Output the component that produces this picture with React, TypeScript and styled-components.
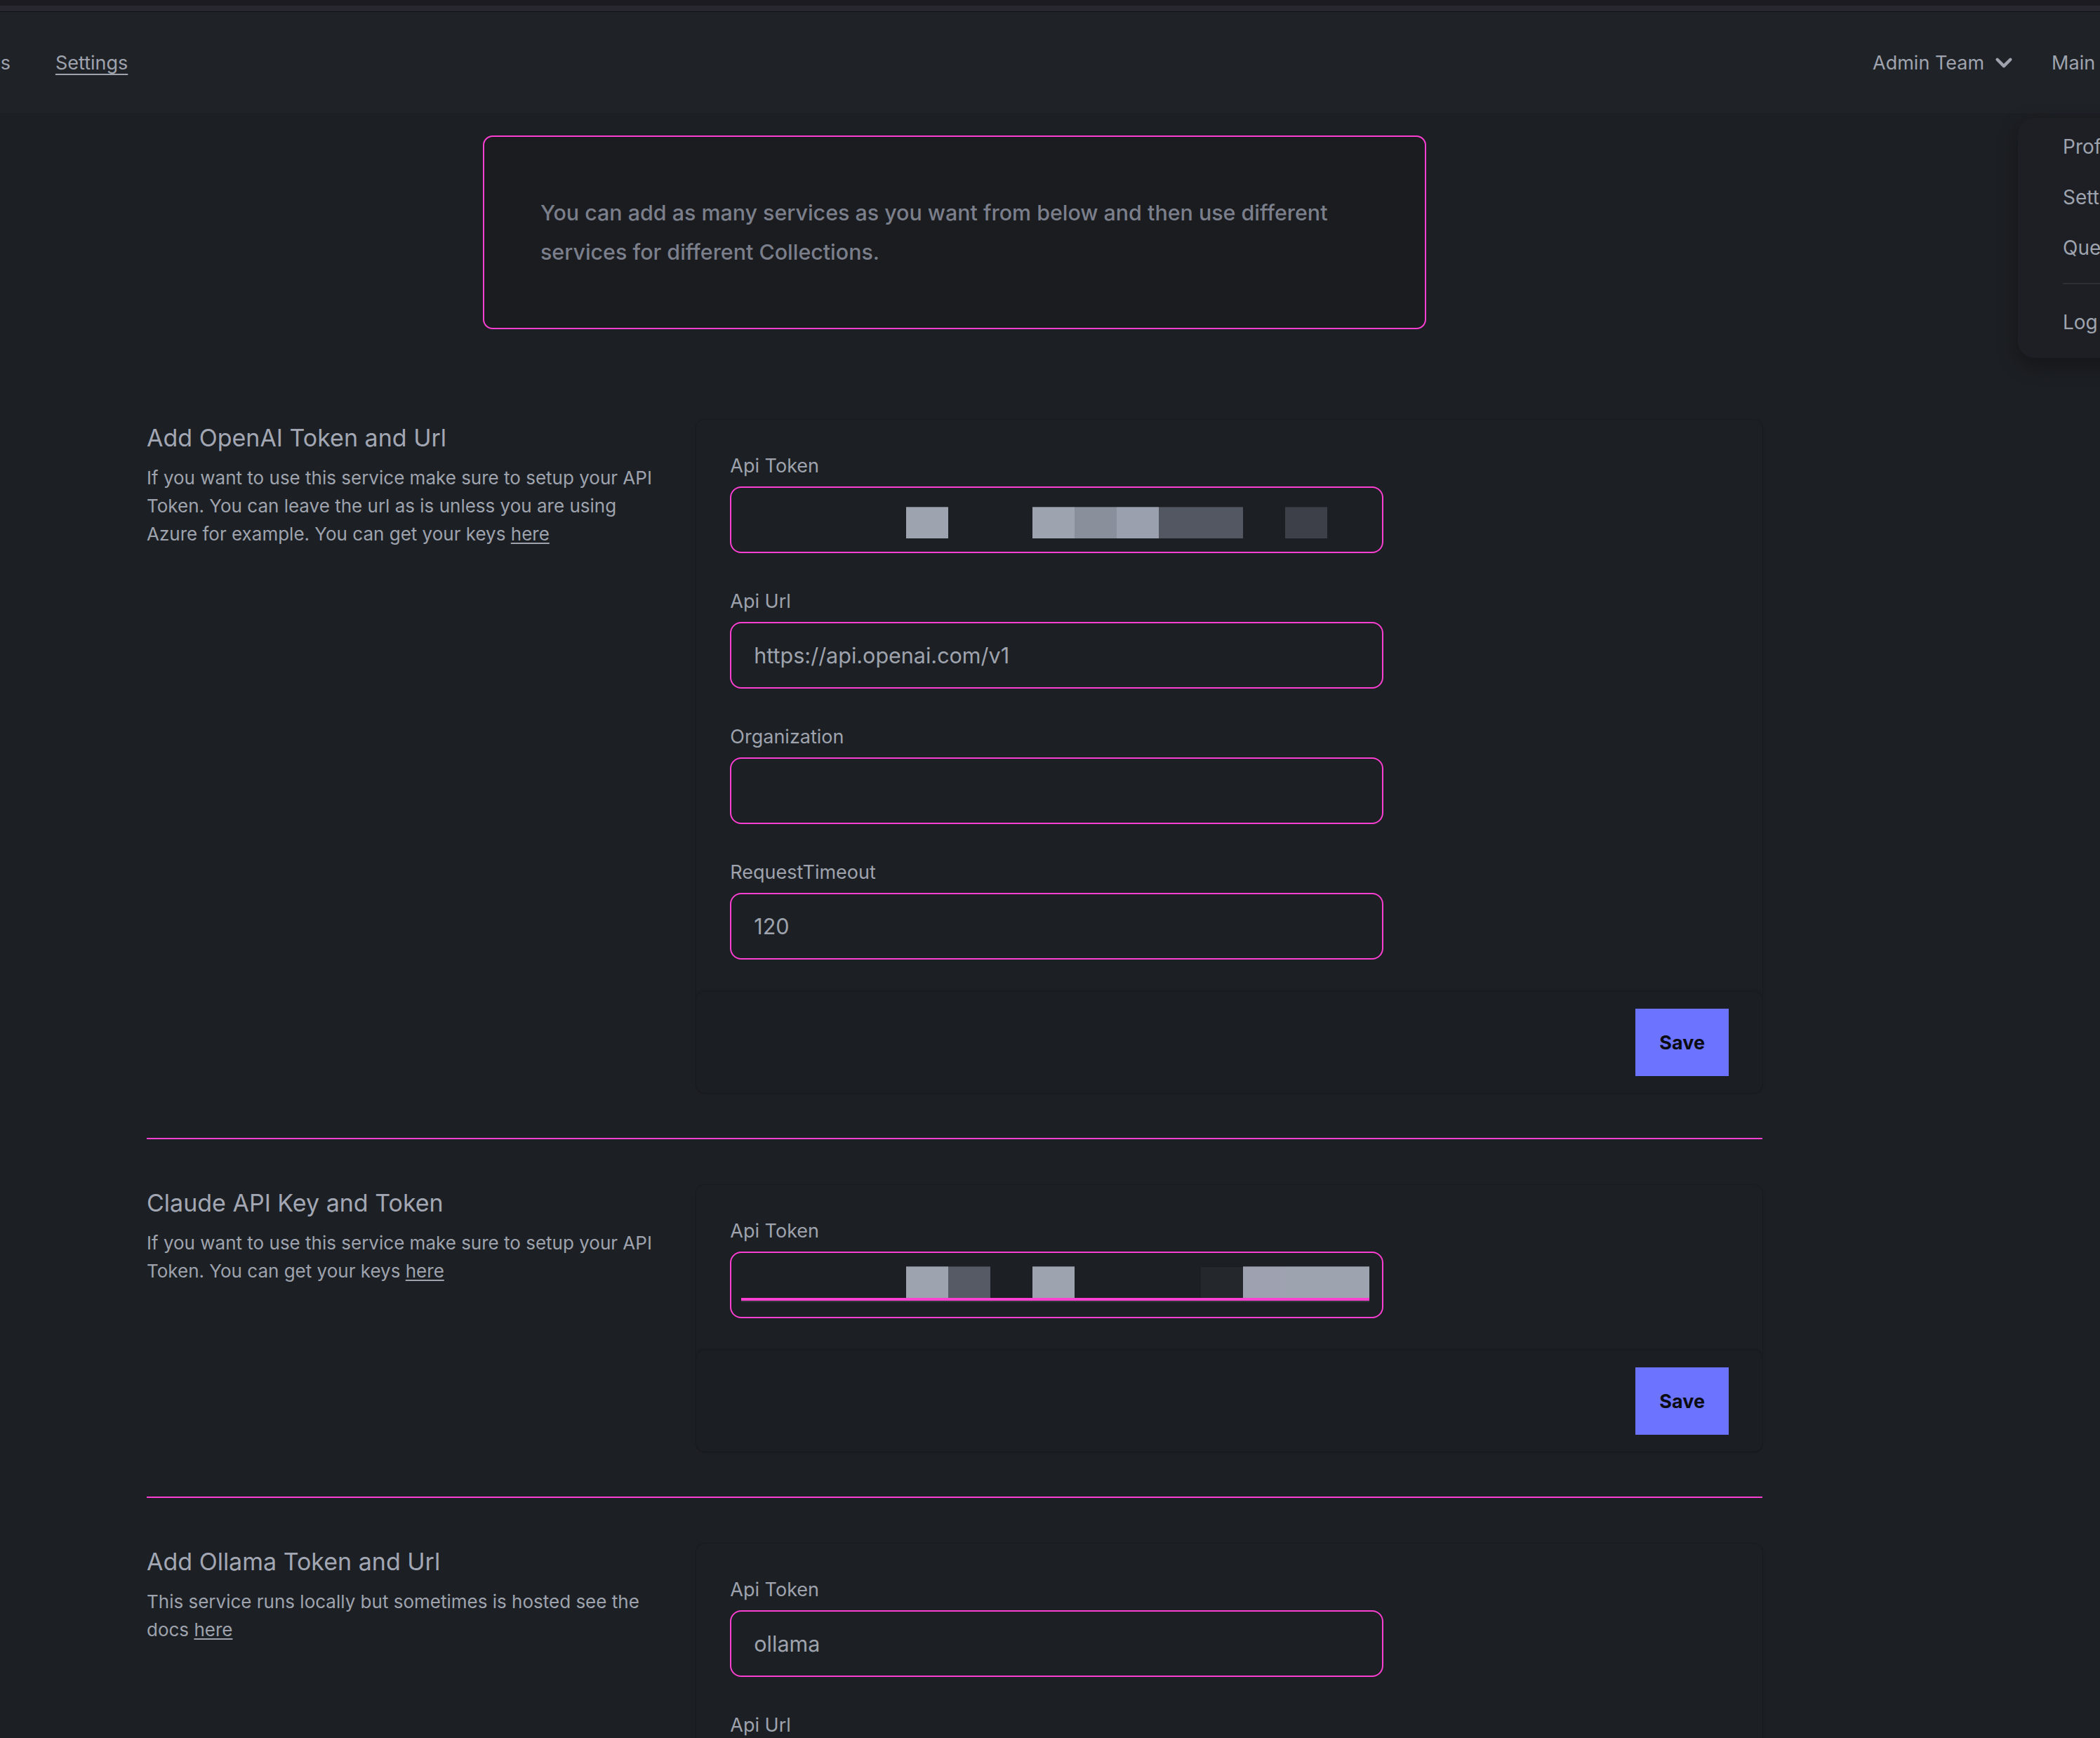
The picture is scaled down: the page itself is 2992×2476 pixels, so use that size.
import React from "react";
import styled, { createGlobalStyle } from "styled-components";

const FONT = `Inter, "Noto Sans", "Liberation Sans", sans-serif`;
const PINK = "#fb3fd1";
const MUTED = "#9ea3ae";

const GlobalStyle = createGlobalStyle`
  html, body {
    margin: 0;
    background: #1c1f23;
    font-family: ${FONT};
    color: ${MUTED};
  }
  * { box-sizing: border-box; }
`;

const Page = styled.div`
  position: relative;
  min-height: 2476px;
  overflow: hidden;
`;

const WindowStrip = styled.div`
  height: 17px;
  background: linear-gradient(#1c1b21 0 8px, #28262f 8px 16px, #111214 16px);
`;

const Nav = styled.nav`
  height: 144px;
  background: #1f2226;
  display: flex;
  align-items: center;
  justify-content: space-between;
  font-size: 27px;
`;

const NavLinks = styled.div`
  display: flex;
  gap: 64px;
  margin-left: -127px;
`;

const NavLink = styled.a<{ $active?: boolean }>`
  color: ${MUTED};
  white-space: nowrap;
  text-decoration: ${(p) => (p.$active ? "underline" : "none")};
  text-underline-offset: 6px;
  text-decoration-thickness: 2px;
`;

const NavRight = styled.div`
  display: flex;
  align-items: center;
  gap: 51px;
  margin-right: -61px;
`;

const TeamButton = styled.button`
  display: flex;
  align-items: center;
  gap: 11px;
  background: none;
  border: 0;
  padding: 0;
  font: inherit;
  color: ${MUTED};
`;

const Dropdown = styled.div`
  position: absolute;
  top: 168px;
  left: 2875px;
  width: 300px;
  height: 342px;
  padding: 5px 0 0 64px;
  background: #1d1f25;
  border-radius: 24px;
  box-shadow: 0 10px 30px rgba(0, 0, 0, 0.3);
  display: flex;
  flex-direction: column;
  font-size: 28px;
`;

const MenuItem = styled.div`
  height: 72px;
  line-height: 72px;
  color: ${MUTED};
  white-space: nowrap;
`;

const MenuDivider = styled.div`
  height: 2px;
  background: #2c2f36;
  margin: 14px 0 18px;
`;

const Container = styled.main`
  width: 2302px;
  margin-left: 209px;
  padding-bottom: 200px;
`;

const InfoBox = styled.div`
  max-width: 1344px;
  margin: 32px auto 0;
  padding: 80px;
  border: 2px solid ${PINK};
  border-radius: 14px;
  background: #1a1c20;
  font-size: 30.4px;
  line-height: 56px;
  font-weight: 500;
  color: #7b7f8b;
`;

const Section = styled.section<{ $first?: boolean }>`
  display: grid;
  grid-template-columns: repeat(3, 1fr);
  gap: 48px;
  margin-top: ${(p) => (p.$first ? "129px" : "0")};
`;

const Aside = styled.div`
  padding-top: 2px;
`;

const SectionTitle = styled.h3`
  margin: 0;
  font-size: 34px;
  line-height: 48px;
  font-weight: 400;
  color: #a2a7b3;
`;

const SectionText = styled.p`
  margin: 13px 0 0;
  font-size: 26px;
  line-height: 40px;
  color: ${MUTED};

  a {
    color: inherit;
    text-decoration: underline;
    text-underline-offset: 3px;
  }
`;

const Card = styled.div`
  grid-column: span 2;
  border-radius: 12px;
  box-shadow: 0 0 0 1px rgba(0, 0, 0, 0.08), 0 1px 3px rgba(0, 0, 0, 0.15);
  overflow: hidden;
`;

const CardBody = styled.div`
  padding: 46px 48px 46px;
  display: flex;
  flex-direction: column;
  gap: 49px;
`;

const Field = styled.label`
  display: flex;
  flex-direction: column;
  gap: 9px;
`;

const Label = styled.span`
  font-size: 27px;
  line-height: 40px;
  color: ${MUTED};
`;

const InputBox = styled.div`
  position: relative;
  width: 931px;
  height: 95px;
  border: 2px solid ${PINK};
  border-radius: 16px;
  padding: 0 32px;
  display: flex;
  align-items: center;
  font-size: 30.5px;
  color: ${MUTED};
  background: #1c1f23;
`;

const MaskRow = styled.div<{ $top: number }>`
  position: absolute;
  left: 9px;
  top: ${(p) => p.$top}px;
  display: flex;
`;

const MaskCell = styled.div<{ $color?: string }>`
  width: 60px;
  height: 45px;
  background: ${(p) => p.$color ?? "transparent"};
  box-shadow: ${(p) => (p.$color ? "inset 0 1px 0 rgba(0,0,0,0.25)" : "none")};
`;

const MaskUnderline = styled.div`
  position: absolute;
  left: 14px;
  top: 64px;
  width: 895px;
  height: 4px;
  background: ${PINK};
  box-shadow: 0 2px 0 #33343c;
`;

const CardFooter = styled.div`
  padding: 24px 48px;
  background: #1b1e22;
  border-radius: 12px;
  box-shadow: 0 -1px 4px rgba(0, 0, 0, 0.2);
  display: flex;
  justify-content: flex-end;
`;

const SaveButton = styled.button`
  height: 96px;
  padding: 0 34px;
  border: 0;
  background: #6b73ff;
  color: #0b0b12;
  font-family: ${FONT};
  font-size: 27px;
  font-weight: 700;
`;

const Divider = styled.hr`
  border: 0;
  height: 2px;
  background: ${PINK};
  margin: 64px 0 65px;
`;

type Mask = { cells: (string | null)[]; top: number; underline?: boolean };

const openAiMask: Mask = {
  top: 27,
  cells: [null, null, null, null, "#9ea3b0", null, null, "#9ea3b0", "#8a8f9c", "#9aa0ad", "#535761", "#535761", null, "#3d4048"],
};

const claudeMask: Mask = {
  top: 19,
  underline: true,
  cells: [null, null, null, null, "#9ea3b0", "#555a64", null, "#9ea3b0", null, null, null, "#24272b", "#9ea2b0", "#9ea3b0", "#9ea3b0"],
};

function MaskedToken({ mask }: { mask: Mask }) {
  return (
    <>
      <MaskRow $top={mask.top}>
        {mask.cells.map((c, i) => (
          <MaskCell key={i} $color={c ?? undefined} />
        ))}
      </MaskRow>
      {mask.underline && <MaskUnderline />}
    </>
  );
}

type FieldDef = { label: string; value?: string; mask?: Mask };

function ServiceSection({
  title,
  children,
  fields,
  first,
}: {
  title: string;
  children: React.ReactNode;
  fields: FieldDef[];
  first?: boolean;
}) {
  return (
    <Section $first={first}>
      <Aside>
        <SectionTitle>{title}</SectionTitle>
        <SectionText>{children}</SectionText>
      </Aside>
      <Card>
        <CardBody>
          {fields.map((f) => (
            <Field key={f.label}>
              <Label>{f.label}</Label>
              <InputBox>
                {f.mask ? <MaskedToken mask={f.mask} /> : f.value}
              </InputBox>
            </Field>
          ))}
        </CardBody>
        <CardFooter>
          <SaveButton>Save</SaveButton>
        </CardFooter>
      </Card>
    </Section>
  );
}

export default function App() {
  return (
    <Page>
      <GlobalStyle />
      <WindowStrip />
      <Nav>
        <NavLinks>
          <NavLink>Collections</NavLink>
          <NavLink $active>Settings</NavLink>
        </NavLinks>
        <NavRight>
          <TeamButton>
            Admin Team
            <svg width="34" height="34" viewBox="0 0 20 20" fill="none" stroke="currentColor" strokeWidth="2.6" strokeLinecap="round" strokeLinejoin="round">
              <path d="M4.5 7.5 10 13l5.5-5.5" />
            </svg>
          </TeamButton>
          <NavLink>Main User</NavLink>
        </NavRight>
      </Nav>

      <Dropdown>
        <MenuItem>Profile</MenuItem>
        <MenuItem>Settings</MenuItem>
        <MenuItem>Queues</MenuItem>
        <MenuDivider />
        <MenuItem>Log out</MenuItem>
      </Dropdown>

      <Container>
        <InfoBox>
          You can add as many services as you want from below and then use different services for different Collections.
        </InfoBox>

        <ServiceSection
          first
          title="Add OpenAI Token and Url"
          fields={[
            { label: "Api Token", mask: openAiMask },
            { label: "Api Url", value: "https://api.openai.com/v1" },
            { label: "Organization", value: "" },
            { label: "RequestTimeout", value: "120" },
          ]}
        >
          If you want to use this service make sure to setup your API Token. You can leave the url as is unless you are using Azure for example. You can get your keys <a href="#">here</a>
        </ServiceSection>

        <Divider />

        <ServiceSection
          title="Claude API Key and Token"
          fields={[{ label: "Api Token", mask: claudeMask }]}
        >
          If you want to use this service make sure to setup your API Token. You can get your keys <a href="#">here</a>
        </ServiceSection>

        <Divider />

        <ServiceSection
          title="Add Ollama Token and Url"
          fields={[
            { label: "Api Token", value: "ollama" },
            { label: "Api Url", value: "http://localhost:11434" },
          ]}
        >
          This service runs locally but sometimes is hosted see the docs <a href="#">here</a>
        </ServiceSection>
      </Container>
    </Page>
  );
}
